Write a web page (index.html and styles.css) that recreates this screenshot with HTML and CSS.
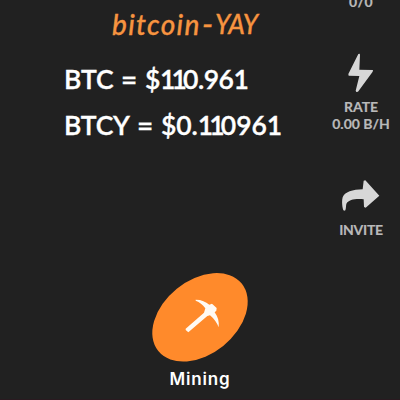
FILE: index.html
```
<!DOCTYPE html>
<html lang="en">
<head>
<meta charset="utf-8">
<title>bitcoin-YAY</title>
<link rel="stylesheet" href="styles.css">
</head>
<body>
<main class="screen">
  <section class="main">
    <h1 class="brand"><span class="brand-lower">bitcoin</span><span class="brand-dash">-</span><span class="brand-upper">YAY</span></h1>
    <div class="prices">
      <p class="price"><span class="btc">BTC</span><span class="equals">=</span><span class="value">$<i>11</i>0.96<i>1</i></span></p>
      <p class="price"><span class="btcy">BTCY</span><span class="equals">=</span><span class="value wide">$0.<i>11</i>096<i>1</i></span></p>
    </div>
    <div class="mining">
      <svg class="mining-icon" viewBox="0 0 330 290">
        <ellipse cx="165" cy="157" rx="161" ry="110.5" transform="rotate(-39 165 157)" fill="#ff8a2b"/>
        <path fill="#fffaf3" d="M152 104 C170 104 182 110 193 119 L201 116 L215 129 L214 137 L209 142 C219 155 223 171 221 187 C216 173 208 162 195 151 L187 153 L130 202 L122 195 L122 191 L177 143 L181 130 C173 119 164 111 152 107 Z"/>
      </svg>
      <span class="mining-label">Mining</span>
    </div>
  </section>
  <aside class="side">
    <span class="label count">0/0</span>
    <svg class="bolt" viewBox="0 0 84 120">
      <path fill="#d7d7d7" d="M34 3 L38 2 L39 5 L37 50 L78 51 L77 56 L33 116 L28 117 L26 113 L37 69 L5 68 L4 63 Z"/>
    </svg>
    <span class="label rate">RATE</span>
    <span class="label speed">0.00 B/H</span>
    <svg class="share" viewBox="0 0 114 99">
      <path fill="#d7d7d7" d="M65 5 L70 4 L112 50 L71 86 L66 84 L65 61 C42 58 20 62 14 73 C11 79 13 91 9 95 L4 94 C0 83 -1 66 2 55 C7 39 33 31 62 31 Z"/>
    </svg>
    <span class="label invite">INVITE</span>
  </aside>
</main>
</body>
</html>
```
FILE: styles.css
```
* { box-sizing: border-box; }
body { margin: 0; background: #212121; }
.screen {
  display: flex;
  width: 400px;
  height: 400px;
  overflow: hidden;
  border-bottom: 1px solid #2a1a20;
  color: #fff;
  font-family: Lato, "Liberation Sans", sans-serif;
}
.main { width: 322px; display: flex; flex-direction: column; }
.brand {
  display: flex;
  height: 36px;
  margin: 8px 0 0 112px;
  color: #f79440;
  font: italic 500 28px/32px Lato, sans-serif;
  -webkit-text-stroke: .3px #f79440;
  white-space: nowrap;
}
.brand-lower { width: 90px; letter-spacing: 1.3px; }
.brand-dash { width: 13px; font-size: 32px; }
.brand-upper { font-size: 26px; letter-spacing: -.2px; }
.prices { height: 92px; margin: 12px 0 0 64px; }
.price {
  display: flex;
  margin: 0;
  height: 46px;
  font-size: 26.5px;
  font-weight: 600;
  line-height: 47px;
  -webkit-text-stroke: .35px #fff;
  white-space: nowrap;
}
.price i { font-style: normal; letter-spacing: -3.8px; }
.btc { width: 57px; }
.btcy { width: 73px; letter-spacing: -.2px; }
.equals { width: 24px; font-size: 28px; }
.value { letter-spacing: -.5px; }
.wide { letter-spacing: -.1px; }
.mining {
  display: flex;
  flex-direction: column;
  align-items: center;
  width: 110px;
  margin: 117px 0 0 145px;
}
.mining-icon { display: block; width: 110px; height: 96.67px; overflow: visible; }
.mining-label {
  margin-top: 6px;
  font: 600 17px/22px Inter, sans-serif;
  letter-spacing: .8px;
}
.side {
  width: 78px;
  display: flex;
  flex-direction: column;
  align-items: center;
  color: #b9b9b9;
}
.label { font: 700 14px/17px Lato, sans-serif; white-space: nowrap; -webkit-text-stroke: .2px #b9b9b9; }
.count { margin-top: -7px; letter-spacing: .4px; }
.bolt { width: 28px; height: 40px; margin-top: 43px; }
.rate { margin-top: 5px; }
.share { width: 38px; height: 33px; margin-top: 47px; }
.invite { margin-top: 9px; letter-spacing: -.3px; }
```
